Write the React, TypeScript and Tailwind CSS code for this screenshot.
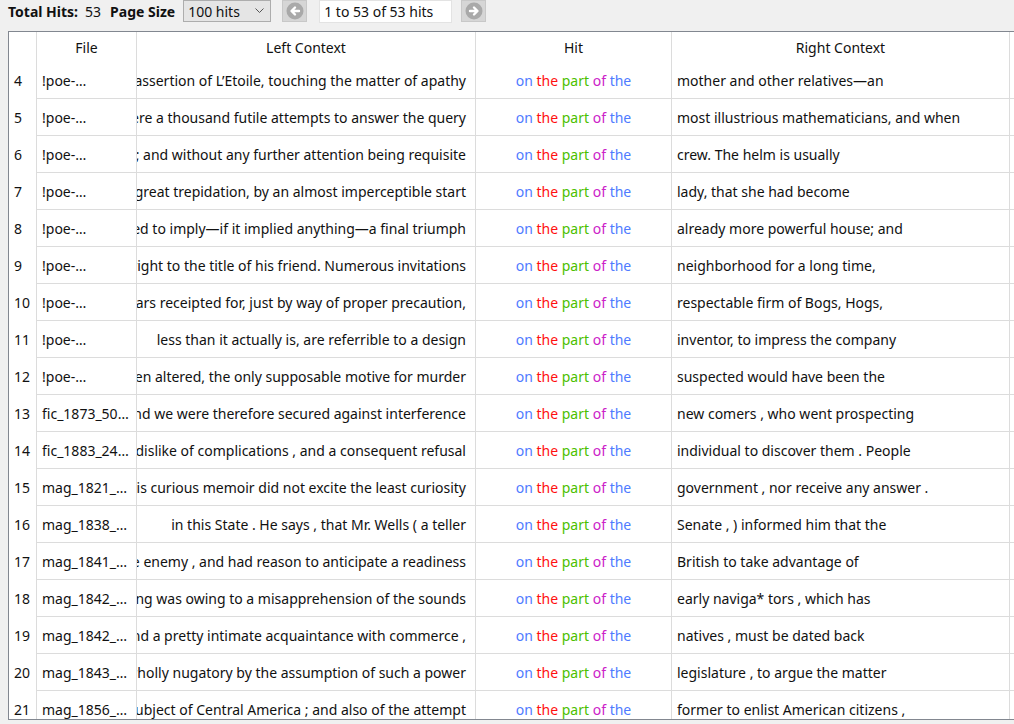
import React from "react";

const rows: [string, string, string, string][] = [
  ["4", "!poe-…", "the assertion of L’Etoile, touching the matter of apathy", "mother and other relatives—an"],
  ["5", "!poe-…", "There were a thousand futile attempts to answer the query", "most illustrious mathematicians, and when"],
  ["6", "!poe-…", "required; and without any further attention being requisite", "crew. The helm is usually"],
  ["7", "!poe-…", "with great trepidation, by an almost imperceptible start", "lady, that she had become"],
  ["8", "!poe-…", "seemed to imply—if it implied anything—a final triumph", "already more powerful house; and"],
  ["9", "!poe-…", "his right to the title of his friend. Numerous invitations", "neighborhood for a long time,"],
  ["10", "!poe-…", "dollars receipted for, just by way of proper precaution,", "respectable firm of Bogs, Hogs,"],
  ["11", "!poe-…", "less than it actually is, are referrible to a design", "inventor, to impress the company"],
  ["12", "!poe-…", "been altered, the only supposable motive for murder", "suspected would have been the"],
  ["13", "fic_1873_50…", "and we were therefore secured against interference", "new comers , who went prospecting"],
  ["14", "fic_1883_24…", "a dislike of complications , and a consequent refusal", "individual to discover them . People"],
  ["15", "mag_1821_…", "this curious memoir did not excite the least curiosity", "government , nor receive any answer ."],
  ["16", "mag_1838_…", "in this State . He says , that Mr. Wells ( a teller", "Senate , ) informed him that the"],
  ["17", "mag_1841_…", "the enemy , and had reason to anticipate a readiness", "British to take advantage of"],
  ["18", "mag_1842_…", "thing was owing to a misapprehension of the sounds", "early naviga* tors , which has"],
  ["19", "mag_1842_…", "and a pretty intimate acquaintance with commerce ,", "natives , must be dated back"],
  ["20", "mag_1843_…", "wholly nugatory by the assumption of such a power", "legislature , to argue the matter"],
  ["21", "mag_1856_…", "the subject of Central America ; and also of the attempt", "former to enlist American citizens ,"],
];

function ArrowButton({ dir }: { dir: "left" | "right" }) {
  return (
    <div className="flex h-[22px] w-[25px] items-center justify-center border border-[#c8c8c8] bg-[#d6d6d6]">
      <svg width="18" height="18" viewBox="0 0 18 18">
        <circle cx="9" cy="9" r="8.5" fill="#a9a9a9" />
        {dir === "left" ? (
          <path d="M13 9H6M9 5.5L5.5 9L9 12.5" stroke="#fff" strokeWidth="2.4" fill="none" strokeLinecap="round" strokeLinejoin="round" />
        ) : (
          <path d="M5 9H12M9 5.5L12.5 9L9 12.5" stroke="#fff" strokeWidth="2.4" fill="none" strokeLinecap="round" strokeLinejoin="round" />
        )}
      </svg>
    </div>
  );
}

function Hit() {
  return (
    <span>
      <span className="text-[#4f7bff]">on</span> <span className="text-[#ff1010]">the</span>{" "}
      <span className="text-[#4cc000]">part</span> <span className="text-[#cc22c8]">of</span>{" "}
      <span className="text-[#4f7bff]">the</span>
    </span>
  );
}

export default function App() {
  return (
    <div
      className="h-[724px] w-[1014px] overflow-hidden bg-[#f0f0f0] text-[14px] text-[#111]"
      style={{ fontFamily: '"Noto Sans", "Open Sans", sans-serif' }}
    >
      <div className="flex h-[31px] items-start gap-0 pl-[8px]">
        <span className="mt-[1px] font-bold">Total Hits:</span>
        <span className="ml-[7px] mt-[1px]">53</span>
        <span className="ml-[9px] mt-[1px] font-bold">Page Size</span>
        <div className="ml-[8px] flex h-[22px] w-[88px] items-center justify-between border border-[#adadad] bg-[#e5e5e5] pl-[4px] pr-[6px]">
          <span>100 hits</span>
          <svg width="9" height="6" viewBox="0 0 9 6">
            <path d="M0.5 0.5L4.5 4.5L8.5 0.5" stroke="#555" strokeWidth="1" fill="none" />
          </svg>
        </div>
        <div className="ml-[11px]">
          <ArrowButton dir="left" />
        </div>
        <div className="ml-[12px] flex h-[23px] w-[133px] items-center border border-[#e3e3e3] bg-white pl-[4px]">
          1 to 53 of 53 hits
        </div>
        <div className="ml-[9px]">
          <ArrowButton dir="right" />
        </div>
      </div>
      <div className="ml-[8px] h-[689px] w-[1020px] overflow-hidden border-b border-l border-t border-[#828790] bg-white">
        <div className="flex h-[30px] items-center">
          <div className="h-full w-[28px] border-r border-[#dcdcdc]" />
          <div className="flex h-full w-[100px] items-center justify-center border-r border-[#dcdcdc]">File</div>
          <div className="flex h-full w-[339px] items-center justify-center border-r border-[#dcdcdc]">Left Context</div>
          <div className="flex h-full w-[196px] items-center justify-center border-r border-[#dcdcdc]">Hit</div>
          <div className="flex h-full w-[338px] items-center justify-center border-r border-[#dcdcdc]">Right Context</div>
        </div>
        {rows.map(([n, file, left, right]) => (
          <div key={n} className="flex h-[37px]">
            <div className="flex h-full w-[28px] items-center border-r border-[#dcdcdc] pl-[5px]">{n}</div>
            <div className="flex h-full grow border-b border-[#dcdcdc]">
              <div className="flex w-[100px] items-center overflow-hidden whitespace-nowrap border-r border-[#dcdcdc] pl-[5px]">
                {file}
              </div>
              <div className="flex w-[339px] items-center justify-end overflow-hidden border-r border-[#dcdcdc] pr-[9px]">
                <span className="shrink-0 whitespace-nowrap">{left}</span>
              </div>
              <div className="flex w-[196px] items-center justify-center whitespace-nowrap border-r border-[#dcdcdc]">
                <Hit />
              </div>
              <div className="flex w-[338px] items-center overflow-hidden whitespace-nowrap border-r border-[#dcdcdc] pl-[5px]">
                {right}
              </div>
            </div>
          </div>
        ))}
      </div>
    </div>
  );
}
